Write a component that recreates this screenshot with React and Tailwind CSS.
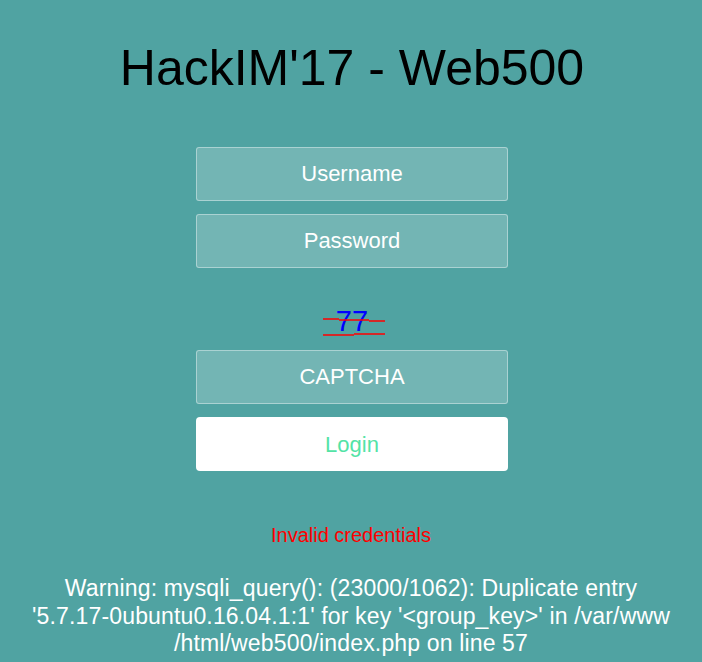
import React from 'react';

const FONT = { fontFamily: '"Liberation Sans", Arial, sans-serif' };

function Field({ placeholder, type = 'text' }) {
  return (
    <input
      type={type}
      placeholder={placeholder}
      className="block w-[312px] h-[54px] rounded-[3px] border border-white/40 bg-white/20 text-center text-[22px] text-white placeholder:text-white outline-none"
    />
  );
}

function Captcha() {
  return (
    <div className="h-[56px] mb-[13px] flex justify-center">
      <span className="relative mt-[25.5px] h-[29px] text-[29px] leading-[29px] text-[#0000ff]">
        77
        <svg className="absolute left-[-13px] top-0 pointer-events-none" width="62" height="32" viewBox="0 0 62 32">
          <path d="M0 12H16M16 13H46M46 14H62" stroke="#ff0000" strokeWidth="1.5" fill="none" />
          <path d="M0 28H31M31 27H62" stroke="#ff0000" strokeWidth="1.5" fill="none" />
        </svg>
      </span>
    </div>
  );
}

export default function App() {
  return (
    <div className="min-h-[662px] w-full bg-[#50a3a2] flex flex-col items-center" style={FONT}>
      <h1 className="pt-[39px] pl-[2px] text-[50px] leading-[58px] font-normal text-black">HackIM'17 - Web500</h1>
      <form className="mt-[50px] pl-[2px] flex flex-col items-center" onSubmit={(e) => e.preventDefault()}>
        <div className="mb-[13px]"><Field placeholder="Username" /></div>
        <div className="mb-[13px]"><Field placeholder="Password" type="password" /></div>
        <Captcha />
        <div className="mb-[13px]"><Field placeholder="CAPTCHA" /></div>
        <button
          type="submit"
          className="w-[312px] h-[54px] rounded-[4px] bg-white text-[22px] text-[#53e3a6]"
        >
          Login
        </button>
      </form>
      <p className="mt-[52px] text-[20px] leading-[24px] text-[#ff0000]">Invalid credentials</p>
      <p className="mt-[28px] text-center text-[23px] leading-[27.5px] tracking-[0.15px] text-white">
        Warning: mysqli_query(): (23000/1062): Duplicate entry
        <br />
        '5.7.17-0ubuntu0.16.04.1:1' for key '&lt;group_key&gt;' in /var/www
        <br />
        /html/web500/index.php on line 57
      </p>
    </div>
  );
}
